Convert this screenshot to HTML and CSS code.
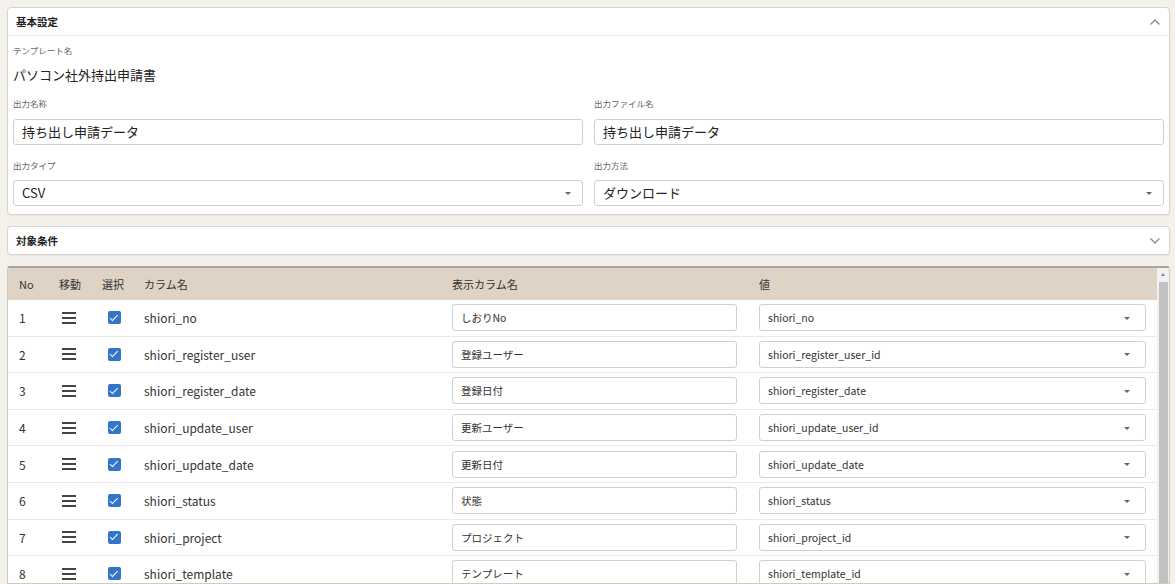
FILE: index.html
```html
<!DOCTYPE html>
<html lang="ja">
<head>
<meta charset="utf-8">
<title>出力テンプレート</title>
<link rel="stylesheet" href="styles.css">
</head>
<body>
<div class="app">
  <section class="card">
    <div class="card-head">
      <span class="card-title">基本設定</span>
      <svg class="chev" width="12" height="8" viewBox="0 0 12 8"><path d="M1.5 6.5 L6 2 L10.5 6.5" fill="none" stroke="#8a8a8a" stroke-width="1.3"/></svg>
    </div>
    <div class="card-body">
      <div class="field">
        <div class="label">テンプレート名</div>
        <div class="static">パソコン社外持出申請書</div>
      </div>
      <div class="grid2">
        <div class="field">
          <div class="label">出力名称</div>
          <div class="input">持ち出し申請データ</div>
        </div>
        <div class="field">
          <div class="label">出力ファイル名</div>
          <div class="input">持ち出し申請データ</div>
        </div>
        <div class="field">
          <div class="label">出力タイプ</div>
          <div class="input select">CSV<span class="caret"></span></div>
        </div>
        <div class="field">
          <div class="label">出力方法</div>
          <div class="input select">ダウンロード<span class="caret"></span></div>
        </div>
      </div>
    </div>
  </section>

  <section class="card collapsed">
    <div class="card-head nb">
      <span class="card-title">対象条件</span>
      <svg class="chev" width="12" height="8" viewBox="0 0 12 8"><path d="M1.5 1.5 L6 6 L10.5 1.5" fill="none" stroke="#8a8a8a" stroke-width="1.3"/></svg>
    </div>
  </section>

  <section class="table-card">
    <div class="table">
      <div class="trow thead">
        <div class="cell">No</div>
        <div class="cell">移動</div>
        <div class="cell">選択</div>
        <div class="cell">カラム名</div>
        <div class="cell">表示カラム名</div>
        <div class="cell">値</div>
      </div>
      <div class="trow"><div class="cell">1</div><div class="cell"><span class="burger"></span></div><div class="cell"><span class="check"></span></div><div class="cell">shiori_no</div><div class="cell"><div class="tinput">しおりNo</div></div><div class="cell"><div class="tinput tselect">shiori_no<span class="caret"></span></div></div></div>
      <div class="trow"><div class="cell">2</div><div class="cell"><span class="burger"></span></div><div class="cell"><span class="check"></span></div><div class="cell">shiori_register_user</div><div class="cell"><div class="tinput">登録ユーザー</div></div><div class="cell"><div class="tinput tselect">shiori_register_user_id<span class="caret"></span></div></div></div>
      <div class="trow"><div class="cell">3</div><div class="cell"><span class="burger"></span></div><div class="cell"><span class="check"></span></div><div class="cell">shiori_register_date</div><div class="cell"><div class="tinput">登録日付</div></div><div class="cell"><div class="tinput tselect">shiori_register_date<span class="caret"></span></div></div></div>
      <div class="trow"><div class="cell">4</div><div class="cell"><span class="burger"></span></div><div class="cell"><span class="check"></span></div><div class="cell">shiori_update_user</div><div class="cell"><div class="tinput">更新ユーザー</div></div><div class="cell"><div class="tinput tselect">shiori_update_user_id<span class="caret"></span></div></div></div>
      <div class="trow"><div class="cell">5</div><div class="cell"><span class="burger"></span></div><div class="cell"><span class="check"></span></div><div class="cell">shiori_update_date</div><div class="cell"><div class="tinput">更新日付</div></div><div class="cell"><div class="tinput tselect">shiori_update_date<span class="caret"></span></div></div></div>
      <div class="trow"><div class="cell">6</div><div class="cell"><span class="burger"></span></div><div class="cell"><span class="check"></span></div><div class="cell">shiori_status</div><div class="cell"><div class="tinput">状態</div></div><div class="cell"><div class="tinput tselect">shiori_status<span class="caret"></span></div></div></div>
      <div class="trow"><div class="cell">7</div><div class="cell"><span class="burger"></span></div><div class="cell"><span class="check"></span></div><div class="cell">shiori_project</div><div class="cell"><div class="tinput">プロジェクト</div></div><div class="cell"><div class="tinput tselect">shiori_project_id<span class="caret"></span></div></div></div>
      <div class="trow"><div class="cell">8</div><div class="cell"><span class="burger"></span></div><div class="cell"><span class="check"></span></div><div class="cell">shiori_template</div><div class="cell"><div class="tinput">テンプレート</div></div><div class="cell"><div class="tinput tselect">shiori_template_id<span class="caret"></span></div></div></div>
      <div class="trow"><div class="cell">9</div><div class="cell"><span class="burger"></span></div><div class="cell"><span class="check"></span></div><div class="cell">shiori_title</div><div class="cell"><div class="tinput">タイトル</div></div><div class="cell"><div class="tinput tselect">shiori_title<span class="caret"></span></div></div></div>
    </div>
    <div class="scrollbar">
      <span class="sb-up"></span>
      <span class="sb-thumb"></span>
    </div>
  </section>
</div>
</body>
</html>
```
FILE: styles.css
```css
html, body {
  margin: 0;
  padding: 0;
  height: 100%;
  overflow: hidden;
}
body {
  background: #f4f1eb;
  font-family: "Noto Sans CJK JP", "Noto Sans", sans-serif;
  color: #333;
}
.app {
  height: 584px;
  padding: 7px 5px 0 7px;
  box-sizing: border-box;
  display: flex;
  flex-direction: column;
  gap: 11px;
}
.card {
  background: #fff;
  border: 1px solid #d6d3cd;
  border-radius: 4px;
  box-shadow: 0 1px 1px rgba(0,0,0,0.06);
}
.card-head {
  height: 27px;
  display: flex;
  align-items: center;
  justify-content: space-between;
  padding: 0 9px 0 8px;
  border-bottom: 1px solid #e9e7e3;
}
.card-head.nb { border-bottom: none; height: 27px; }
.card-title {
  font-size: 10.5px;
  font-weight: 700;
  color: #222;
}
.chev { margin-right: -1px; }
.card-body {
  padding: 7px 5px 8px 5px;
}
.label {
  font-size: 8.5px;
  color: #666;
  line-height: 14px;
  height: 14px;
}
.static {
  margin-top: 8px;
  font-size: 13px;
  line-height: 20px;
  color: #222;
  margin-bottom: 11px;
}
.grid2 {
  display: grid;
  grid-template-columns: 1fr 1fr;
  column-gap: 11px;
  row-gap: 13px;
}
.grid2 .label { margin-bottom: 9px; }
.grid2 .field:nth-child(n+3) .label { margin-bottom: 8px; }
.input {
  height: 26px;
  box-sizing: border-box;
  border: 1px solid #cfcfcf;
  border-radius: 3px;
  padding: 0 8px;
  font-size: 13px;
  line-height: 24px;
  color: #222;
  position: relative;
}
.caret {
  position: absolute;
  right: 11px;
  top: 50%;
  margin-top: -1px;
  width: 0;
  height: 0;
  border-left: 3px solid transparent;
  border-right: 3px solid transparent;
  border-top: 3px solid #666;
}
.table-card {
  flex: 1;
  min-height: 0;
  background: #fff;
  border: 1px solid #cfccc6;
  border-top: 2px solid #a9a6a1;
  border-radius: 3px 3px 0 0;
  display: flex;
  overflow: hidden;
}
.table {
  flex: 1;
  min-width: 0;
}
.trow {
  display: grid;
  grid-template-columns: 40px 43px 42px 308px 307px 1fr;
  height: 36.6px;
  box-sizing: border-box;
  border-bottom: 1px solid #ebe9e5;
  align-items: center;
  font-size: 12px;
  color: #333;
}
.trow.thead {
  height: 32px;
  background: #ded3c4;
  border-bottom: none;
  font-size: 11px;
  color: #333;
}
.cell {
  padding: 0 11px;
  white-space: nowrap;
  display: flex;
  align-items: center;
}
.burger {
  width: 14px;
  height: 12px;
  margin-left: 3px;
  background:
    linear-gradient(#444, #444) 0 0 / 14px 2px no-repeat,
    linear-gradient(#444, #444) 0 5px / 14px 2px no-repeat,
    linear-gradient(#444, #444) 0 10px / 14px 2px no-repeat;
}
.check {
  width: 13px;
  height: 13px;
  margin-left: 6px;
  border-radius: 2px;
  background: #3375c8;
  position: relative;
}
.check::after {
  content: "";
  position: absolute;
  left: 4px;
  top: 1.5px;
  width: 3px;
  height: 6.5px;
  border-right: 1.6px solid #fff;
  border-bottom: 1.6px solid #fff;
  transform: rotate(45deg);
}
.tinput {
  flex: 1;
  height: 27px;
  box-sizing: border-box;
  border: 1px solid #d0d0d0;
  border-radius: 3px;
  padding: 0 8px;
  font-size: 10.5px;
  line-height: 25px;
  color: #333;
  position: relative;
}
.tselect .caret { right: 15px; }
.scrollbar {
  width: 12px;
  background: #f1f1f1;
  position: relative;
  display: flex;
  flex-direction: column;
  align-items: center;
}
.sb-up {
  margin-top: 5px;
  width: 0;
  height: 0;
  border-left: 2.5px solid transparent;
  border-right: 2.5px solid transparent;
  border-bottom: 3px solid #888;
}
.sb-thumb {
  margin-top: 6px;
  width: 9px;
  flex: 1;
  background: #c1c1c1;
}
```
